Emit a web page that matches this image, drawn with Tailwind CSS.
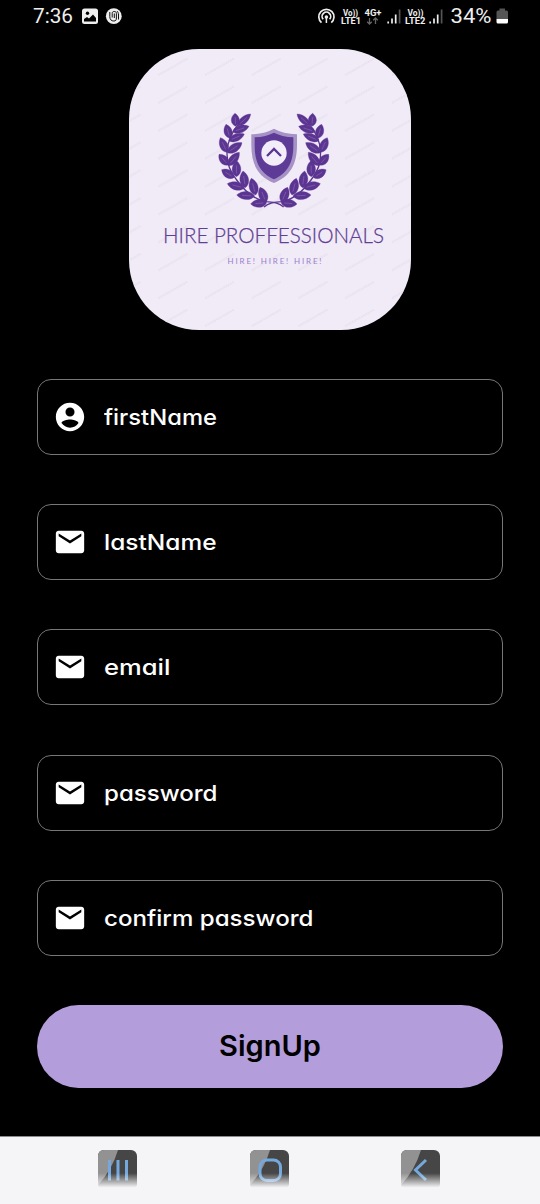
<!DOCTYPE html>
<html lang="en">
<head>
<meta charset="utf-8">
<title>Sign up</title>
<script src="https://cdn.jsdelivr.net/npm/@tailwindcss/browser@4"></script>
</head>
<body class="bg-black">
<svg class="absolute" width="0" height="0">
  <symbol id="mail" viewBox="0 0 24 24"><path fill="#fff" d="M20 4H4c-1.100 0-1.990.9-1.990 2L2 18c0 1.100.9 2 2 2h16c1.100 0 2-.9 2-2V6c0-1.100-.9-2-2-2zm0 4l-8 5-8-5V6l8 5 8-5v2z"/></symbol>
  <symbol id="signal" viewBox="0 0 14 16"><path d="M1.200 13v2M5 10v5M8.700 6v9" stroke="#eee" stroke-width="1.700"/><path d="M12.600 1v14" stroke="#555" stroke-width="1.700"/></symbol>
  <linearGradient id="fade" x1="0" y1="0" x2="0" y2="1"><stop offset=".58" stop-color="#f5f5f7" stop-opacity="0"/><stop offset=".94" stop-color="#f5f5f7"/></linearGradient>
  <symbol id="tile" viewBox="0 0 40 40"><rect width="39" height="40" rx="6" fill="#464646"/><path d="M6 0H20Q14 20 0 35V6Q0 0 6 0z" fill="#929292"/></symbol>
</svg>
<div class="w-[540px] h-[1204px] flex flex-col bg-black overflow-hidden font-['Inter',sans-serif]">
  <header class="h-[48px] shrink-0">
    <svg class="block" width="540" height="36" viewBox="0 0 540 36" fill="none" font-family="Roboto, sans-serif">
      <text x="33" y="23" font-size="20" fill="#eee" textLength="40" lengthAdjust="spacingAndGlyphs">7:36</text>
      <rect x="82" y="8.500" width="16" height="15.500" rx="2.500" fill="#eee"/><circle cx="87.500" cy="13.300" r="1.700" fill="#000"/><path d="M84 21.500V19l3-2 2 1.500 4-4 3 3.500v3.500z" fill="#000"/>
      <circle cx="113.800" cy="16.200" r="7.900" fill="#eee"/><path d="M109.800 12v4.500c0 3 1.500 4.500 4 4.500 2 0 2.600-1 2.600-3v-4.500c0-1.500-.8-2-2.200-2s-2 .6-2 2v4M114.300 13.500v4.500M118.500 19.500v-4.500c0-2-.6-3-1.500-4" stroke="#111" stroke-width="1"/>
      <g stroke="#eee" stroke-width="1.700"><path d="M321.500 22.700a7.600 7.600 0 1 1 9.800 0"/><path d="M323.200 19.300a4.300 4.300 0 1 1 6.400 0"/></g><circle cx="326.400" cy="17" r="1.800" fill="#eee"/><path d="M326.400 17v6" stroke="#eee" stroke-width="1.500"/>
      <g fill="#eee" font-weight="700" font-size="9">
        <text x="343" y="15.500" textLength="15" lengthAdjust="spacingAndGlyphs">Vo))</text>
        <text x="341" y="24" textLength="20" lengthAdjust="spacingAndGlyphs">LTE1</text>
        <text x="364.500" y="15.500" textLength="17" lengthAdjust="spacingAndGlyphs">4G+</text>
        <text x="407.500" y="15.500" textLength="16" lengthAdjust="spacingAndGlyphs">Vo))</text>
        <text x="405" y="24" textLength="20.500" lengthAdjust="spacingAndGlyphs">LTE2</text>
      </g>
      <path d="M369.500 18v6m-2.300-2.300l2.300 2.300 2.300-2.300M375.500 24v-6m-2.300 2.300l2.300-2.300 2.300 2.300" stroke="#666" stroke-width="1.300"/>
      <use href="#signal" x="387" y="8.500" width="14" height="16"/><use href="#signal" x="429" y="8.500" width="14" height="16"/>
      <text x="450.500" y="23" font-size="20" fill="#eee" textLength="41" lengthAdjust="spacingAndGlyphs">34%</text>
      <path d="M499.500 8.500h5.500v2h1.500q1.500 0 1.500 1.500V19h-11.500v-7q0-1.500 1.500-1.500h1.500z" fill="#555"/><path d="M496.500 19H508v3q0 1.500-1.500 1.500H498q-1.500 0-1.500-1.500z" fill="#fff"/>
    </svg>
  </header>

  <main class="flex flex-col items-center">
    <div class="mt-[0.5px] w-[282px] h-[281px] rounded-[70px] overflow-hidden bg-[#f1ebf8]">
      <svg width="282" height="281" viewBox="129 49 282 281">
        <defs>
          <pattern id="mark" x="149.500" y="53" width="46.700" height="27.900" patternUnits="userSpaceOnUse"><path d="M9 22L38 5.500" stroke="#e7e1ee" stroke-width="2.200" stroke-dasharray="1.800 .8" fill="none"/></pattern>
        </defs>
        <rect x="129" y="48" width="282" height="282" fill="url(#mark)"/>
        <g transform="translate(210 105) scale(.33333)">
          <g id="branch" fill="#5b3591" stroke="#5b3591">
            <path d="M90 52C42 105 38 175 80 225C105 260 135 285 170 290C190 292 205 292 221 306" fill="none" stroke-width="4"/>
          </g>
          <use href="#branch" transform="translate(383 0) scale(-1 1)"/>
          <path d="M192 71Q165 86 124 88V120C124 180 145 215 192 234C239 215 261 180 261 120V88Q219 86 192 71z" fill="#a493c4"/>
          <path d="M192 83Q168 95 134 97V122C134 178 155 205 192 223C229 205 250 178 250 122V97Q216 95 192 83z" fill="#5f3b98"/>
          <circle cx="192" cy="144" r="38" fill="#f3edfa"/>
          <path d="M171 153L192 132L213 153" fill="none" stroke="#5b3591" stroke-width="7"/>
        </g>
        <text x="163" y="242.500" font-family="Lato, sans-serif" font-weight="300" font-size="22" fill="#5f4092" stroke="#5f4092" stroke-width=".25" textLength="221" lengthAdjust="spacingAndGlyphs">HIRE PROFFESSIONALS</text>
        <text x="227.500" y="263.500" font-family="Lato, sans-serif" font-size="8" fill="#9a80cc" textLength="94">HIRE! HIRE! HIRE!</text>
      </svg>
    </div>

    <form class="mt-[49.500px] w-[466px] flex flex-col gap-[49.200px] text-white text-[22px] font-medium [font-feature-settings:'cv11']">
      <label class="h-[76px] border-[1.300px] border-[#77777b] rounded-[14px] flex items-center pl-[15px] gap-[17px]">
        <svg width="34" height="34" viewBox="0 0 24 24"><path fill="#fff" d="M12 2C6.480 2 2 6.480 2 12s4.480 10 10 10 10-4.480 10-10S17.520 2 12 2zm0 3.300a3.200 3.200 0 1 1 0 6.400 3.200 3.200 0 0 1 0-6.400zm0 14.200c-2.500 0-4.710-1.280-6-3.220.03-1.600 4-2.480 6-2.480s5.970.88 6 2.480A7.200 7.200 0 0 1 12 19.500z"/></svg>
        <svg width="240" height="36" fill="#fff"><text y="26" textLength="113" lengthAdjust="spacingAndGlyphs">firstName</text></svg>
      </label>
      <label class="h-[76px] border-[1.300px] border-[#77777b] rounded-[14px] flex items-center pl-[15px] gap-[17px]"><svg width="34" height="34"><use href="#mail"/></svg><svg width="240" height="36" fill="#fff"><text y="26" textLength="112.500" lengthAdjust="spacingAndGlyphs">lastName</text></svg></label>
      <label class="h-[76px] border-[1.300px] border-[#77777b] rounded-[14px] flex items-center pl-[15px] gap-[17px]"><svg width="34" height="34"><use href="#mail"/></svg><svg width="240" height="36" fill="#fff"><text y="26" textLength="66.500" lengthAdjust="spacingAndGlyphs">email</text></svg></label>
      <label class="h-[76px] border-[1.300px] border-[#77777b] rounded-[14px] flex items-center pl-[15px] gap-[17px]"><svg width="34" height="34"><use href="#mail"/></svg><svg width="240" height="36" fill="#fff"><text y="26" textLength="113.500" lengthAdjust="spacingAndGlyphs">password</text></svg></label>
      <label class="h-[76px] border-[1.300px] border-[#77777b] rounded-[14px] flex items-center pl-[15px] gap-[17px]"><svg width="34" height="34"><use href="#mail"/></svg><svg width="240" height="36" fill="#fff"><text y="26" textLength="209.500" lengthAdjust="spacingAndGlyphs">confirm password</text></svg></label>
      <button type="button" class="h-[83px] rounded-full bg-[#b39ddb] text-black text-[29px] font-semibold pb-[2px]">SignUp</button>
    </form>
  </main>

  <nav class="mt-auto h-[68px] shrink-0 bg-[#f5f5f7] border-t border-[#8b8b8d] flex justify-between pl-[98px] pr-[100px] pt-[13px]">
    <svg width="39" height="40" viewBox="0 0 39 40"><use href="#tile" width="40" height="40"/><path d="M11.500 10v20.500M20 10v20.500M28.500 10v20.500" stroke="#75a9de" stroke-width="3"/><rect y="0" width="40" height="40" fill="url(#fade)"/></svg>
    <svg width="39" height="40" viewBox="0 0 39 40"><use href="#tile" width="40" height="40"/><rect x="10" y="10" width="20.500" height="20.500" rx="7" fill="none" stroke="#75a9de" stroke-width="3"/><rect width="40" height="40" fill="url(#fade)"/></svg>
    <svg width="39" height="40" viewBox="0 0 39 40"><use href="#tile" width="40" height="40"/><path d="M25 10L14.500 20L25 30" fill="none" stroke="#75a9de" stroke-width="3"/><rect width="40" height="40" fill="url(#fade)"/></svg>
  </nav>
</div>
<script>
  // Each leaf: base x, base y, tip x, tip y, half width
  const leaves = [
    [83,62,122,27,10],[77,64,75,25,12],[68,80,117,64,11],[60,100,48,58,12],[56,107,103,87,11],
    [51,142,31,98,12],[52,143,96,113,12],[55,180,27,148,12],[55,182,88,142,12],[72,218,35,194,12],
    [79,215,80,167,13],[103,249,52,236,12],[106,248,99,198,13],[134,273,80,270,12],[137,270,124,220,13],
    [170,293,122,297,12],[168,292,150,247,13]
  ];
  const branch = document.getElementById('branch');
  const ns = 'http://www.w3.org/2000/svg';
  for (const [bx, by, tx, ty, w] of leaves) {
    const dx = tx - bx, dy = ty - by, l = Math.hypot(dx, dy), nx = -dy / l * w * 1.35, ny = dx / l * w * 1.35;
    const pt = (t, s) => (bx + dx * t + nx * s) + ' ' + (by + dy * t + ny * s);
    const p = document.createElementNS(ns, 'path');
    p.setAttribute('d', `M${pt(0,0)}C${pt(.2,1)} ${pt(.7,1)} ${pt(1,0)}C${pt(.7,-1)} ${pt(.2,-1)} ${pt(0,0)}z`);
    p.setAttribute('stroke-width', '1');
    branch.appendChild(p);
    const v = document.createElementNS(ns, 'path');
    v.setAttribute('d', `M${pt(.2,0)}L${pt(.7,0)}`);
    v.setAttribute('stroke', '#8a6fb5');
    v.setAttribute('stroke-width', '1.8');
    branch.appendChild(v);
  }
</script>
</body>
</html>
